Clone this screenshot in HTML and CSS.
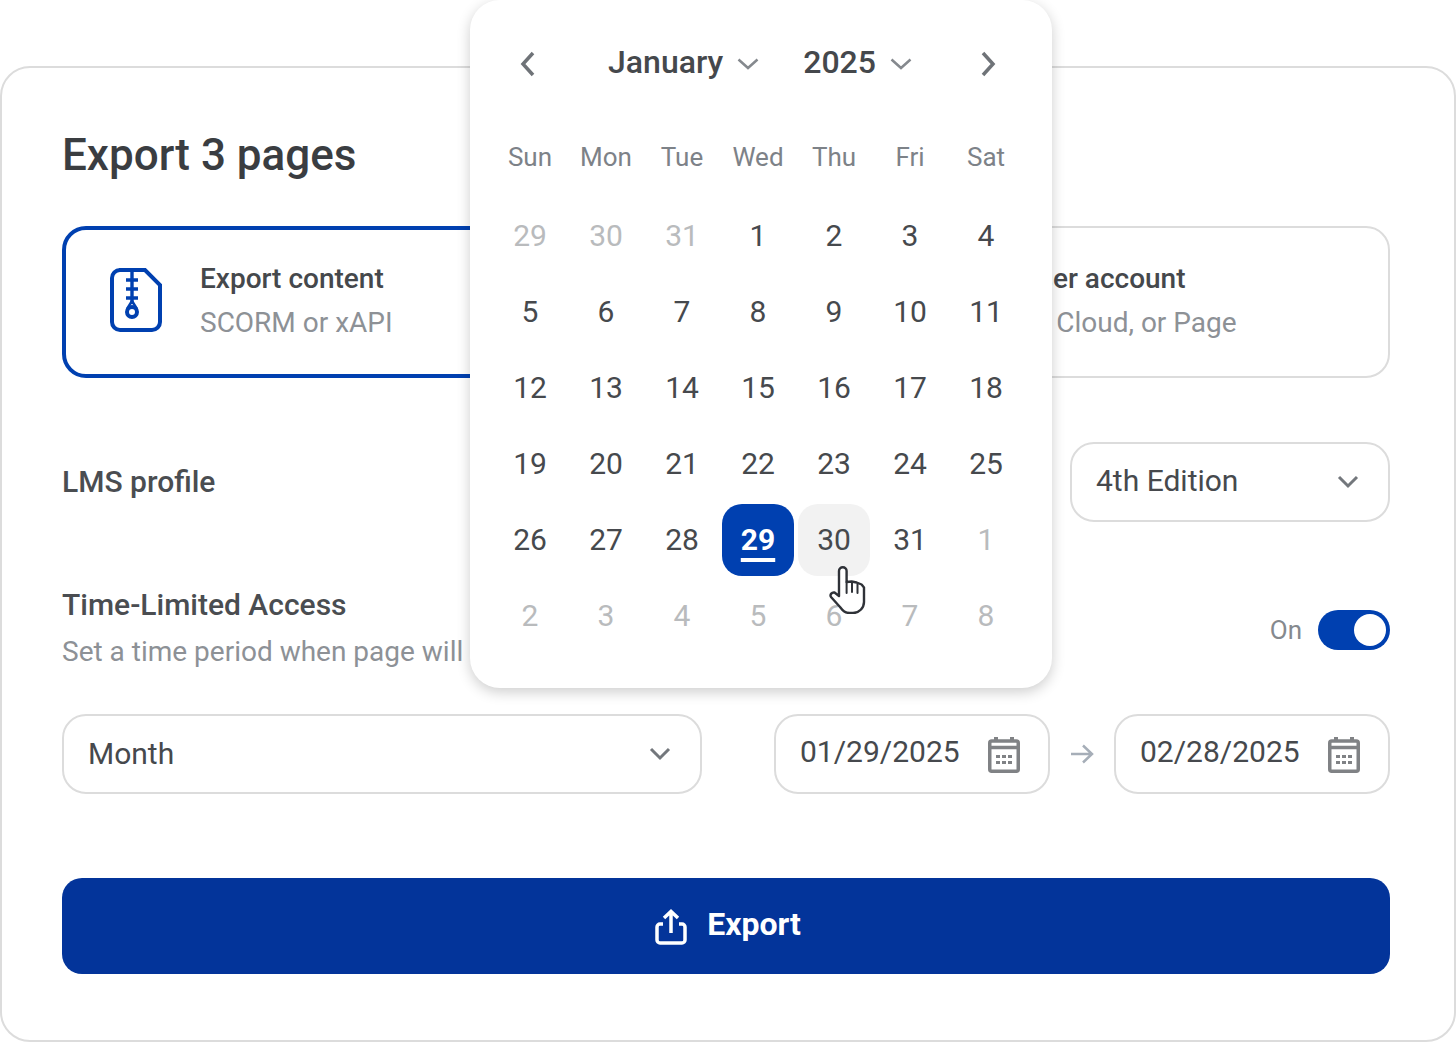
FILE: index.html
```html
<!DOCTYPE html>
<html lang="en">
<head>
<meta charset="utf-8">
<title>Export 3 pages</title>
<link rel="stylesheet" href="styles.css">
</head>
<body>
<main class="card">
  <h1 class="title">Export 3 pages</h1>
  <div class="options">
    <div class="option option-active">
      <svg class="zip" viewBox="0 0 52 64" fill="none" stroke="#0040b0" stroke-width="4"><path d="M9 2h26l15 15v37a8 8 0 0 1-8 8H10a8 8 0 0 1-8-8V10a8 8 0 0 1 8-8z"/><path d="M22 4v32M16 12h12M16 21h12M16 30h12" stroke-width="3.400"/><circle cx="22" cy="44" r="5" stroke-width="4"/><path d="M22 33l-5 8M22 33l5 8" stroke-width="2.500"/></svg>
      <div class="option-text">
        <div class="option-title">Export content</div>
        <div class="option-sub">SCORM or xAPI</div>
      </div>
    </div>
    <div class="option option-right">
      <div class="option-text">
        <div class="option-title">user account</div>
        <div class="option-sub">in Cloud, or Page</div>
      </div>
    </div>
  </div>
  <div class="row-lms">
    <div class="label">LMS profile</div>
    <div class="select select-edition"><span>4th Edition</span><svg class="chev" viewBox="0 0 24 24"><path d="M3 7l9 9 9-9"/></svg></div>
  </div>
  <div class="row-limit">
    <div>
      <div class="label">Time-Limited Access</div>
      <div class="desc">Set a time period when page will</div>
    </div>
    <div class="toggle-wrap"><span class="on">On</span><span class="toggle"><span class="knob"></span></span></div>
  </div>
  <div class="row-dates">
    <div class="select select-month"><span>Month</span><svg class="chev" viewBox="0 0 24 24"><path d="M3 7l9 9 9-9"/></svg></div>
    <div class="date-range">
      <div class="date"><span>01/29/2025</span><svg class="cal" viewBox="0 0 32 36"><path d="M8 0v5M24 0v5" stroke-width="4"/><rect x="1.750" y="4" width="28.500" height="30.250" rx="2"/><path d="M1.750 10.500h28.500" stroke-width="3.500"/><path class="dots" d="M8 18h4v3H8zM14 18h4v3h-4zM20 18h4v3h-4zM8 24h4v3H8zM14 24h4v3h-4zM20 24h4v3h-4z"/></svg></div>
      <svg class="arrow" viewBox="0 0 24 20"><path d="M1 10h21M13 1.500l9 8.500-9 8.500"/></svg>
      <div class="date"><span>02/28/2025</span><svg class="cal" viewBox="0 0 32 36"><path d="M8 0v5M24 0v5" stroke-width="4"/><rect x="1.750" y="4" width="28.500" height="30.250" rx="2"/><path d="M1.750 10.500h28.500" stroke-width="3.500"/><path class="dots" d="M8 18h4v3H8zM14 18h4v3h-4zM20 18h4v3h-4zM8 24h4v3H8zM14 24h4v3h-4zM20 24h4v3h-4z"/></svg></div>
    </div>
  </div>
  <button class="export"><svg class="up" viewBox="0 0 32 36"><path d="M16 24V2.500M9 9l7-6.500L23 9M8 15H5a3 3 0 0 0-3 3v13a3 3 0 0 0 3 3h22a3 3 0 0 0 3-3V18a3 3 0 0 0-3-3h-3"/></svg><span>Export</span></button>
</main>

<section class="popover">
  <header class="cal-head">
    <svg class="nav" viewBox="0 0 16 28"><path d="M13 3L3 14l10 11"/></svg>
    <div class="cal-picks">
      <span class="pick pick-month">January<svg class="mini" viewBox="0 0 22 12"><path d="M1.500 1.500L11 10l9.500-8.500"/></svg></span>
      <span class="pick">2025<svg class="mini" viewBox="0 0 22 12"><path d="M1.500 1.500L11 10l9.500-8.500"/></svg></span>
    </div>
    <svg class="nav" viewBox="0 0 16 28"><path d="M3 3l10 11L3 25"/></svg>
  </header>
  <div class="grid weekdays">
    <span>Sun</span><span>Mon</span><span>Tue</span><span>Wed</span><span>Thu</span><span>Fri</span><span>Sat</span>
  </div>
  <div class="grid days">
    <span class="muted">29</span><span class="muted">30</span><span class="muted">31</span><span>1</span><span>2</span><span>3</span><span>4</span>
    <span>5</span><span>6</span><span>7</span><span>8</span><span>9</span><span>10</span><span>11</span>
    <span>12</span><span>13</span><span>14</span><span>15</span><span>16</span><span>17</span><span>18</span>
    <span>19</span><span>20</span><span>21</span><span>22</span><span>23</span><span>24</span><span>25</span>
    <span>26</span><span>27</span><span>28</span><span class="selected">29</span><span class="hover">30</span><span>31</span><span class="muted">1</span>
    <span class="muted">2</span><span class="muted">3</span><span class="muted">4</span><span class="muted">5</span><span class="muted">6</span><span class="muted">7</span><span class="muted">8</span>
  </div>
</section>

<svg class="cursor" viewBox="0 0 38 48"><path d="M11 30V5a3.800 3.800 0 0 1 7.600 0v11l5-.5 5 1 5 2 2.400 3V36c0 6-5 11-11 11h-3c-5 0-7-2-10-6l-9-10c-1.500-2.500 1-5 3.500-4.500z"/><path class="lines" d="M18.600 16v11M24 16v10M29.500 18v9"/></svg>
</body>
</html>
```

FILE: styles.css
```css
* { box-sizing: border-box; }
html, body { margin: 0; padding: 0; }
body {
  width: 1456px;
  height: 1042px;
  overflow: hidden;
  padding-top: 66px;
  background: #fff;
  font-family: Roboto, "Liberation Sans", sans-serif;
  color: #3c3f43;
  position: relative;
}
.card {
  height: 976px;
  border: 2px solid #dcdcdc;
  border-radius: 30px;
  padding: 60px 64px 0 60px;
  background: #fff;
}
.title {
  margin: 0;
  height: 54px;
  line-height: 54px;
  font-size: 44px;
  font-weight: 500;
  color: #3a3d41;
}
.options {
  display: grid;
  grid-template-columns: 652px 652px;
  gap: 24px;
  margin-top: 44px;
}
.option {
  height: 152px;
  border: 2px solid #dcdcdc;
  border-radius: 24px;
  display: flex;
  align-items: center;
  white-space: nowrap;
}
.option-active { border: 4px solid #0040b0; padding-left: 44px; }
.option-right { padding-left: 283px; }
.option-right .option-sub { padding-left: 4px; }
.zip { width: 52px; height: 64px; margin-right: 38px; margin-top: -4px; }
.option-text { margin-top: -2px; }
.option-title { font-size: 28px; font-weight: 500; line-height: 36px; color: #45484c; }
.option-sub { font-size: 28px; line-height: 36px; margin-top: 8px; color: #8d9196; }
.row-lms {
  display: flex;
  justify-content: space-between;
  align-items: center;
  margin-top: 64px;
  height: 80px;
}
.label { font-size: 30px; font-weight: 500; line-height: 36px; color: #4a4d51; }
.select, .date {
  height: 80px;
  border: 2px solid #dcdcdc;
  border-radius: 24px;
  display: flex;
  align-items: center;
  justify-content: space-between;
  font-size: 30px;
  color: #46494d;
  background: #fff;
}
.select-edition { width: 320px; padding: 0 28px 0 24px; }
.select-edition span { margin-top: -3px; }
.select-month { width: 640px; padding: 0 28px 0 24px; }
.select-month span { margin-top: -2px; }
.chev { width: 24px; height: 24px; fill: none; stroke: #73777c; stroke-width: 3; }
.row-limit {
  display: flex;
  justify-content: space-between;
  align-items: center;
  margin-top: 65px;
  height: 83px;
}
.desc { font-size: 28px; line-height: 36px; margin-top: 11px; color: #8d9196; white-space: nowrap; }
.toggle-wrap { display: flex; align-items: center; gap: 16px; margin-top: 3px; }
.on { font-size: 26px; color: #85898e; }
.toggle {
  width: 72px;
  height: 40px;
  border-radius: 20px;
  background: #0040b0;
  display: flex;
  justify-content: flex-end;
  align-items: center;
  padding-right: 4px;
}
.knob { width: 32px; height: 32px; border-radius: 50%; background: #fff; }
.row-dates {
  display: flex;
  justify-content: space-between;
  margin-top: 44px;
}
.date-range { display: flex; align-items: center; }
.date { width: 276px; padding: 0 28px 0 24px; }
.date span { margin-top: -6px; }
.cal { width: 32px; height: 36px; fill: none; stroke: #808285; stroke-width: 3.500; margin-top: 2px; }
.cal .dots { fill: #808285; stroke: none; }
.arrow { width: 24px; height: 20px; margin: 0 20px; fill: none; stroke: #a6aeb8; stroke-width: 2.500; }
.export {
  display: flex;
  align-items: center;
  justify-content: center;
  gap: 20px;
  width: 1328px;
  height: 96px;
  margin-top: 84px;
  padding: 0 0 0 4px;
  border: 0;
  border-radius: 20px;
  background: #03349a;
  color: #fff;
  font-family: inherit;
  font-size: 32px;
  font-weight: 700;
}
.export span { margin-top: -4px; }
.up { width: 32px; height: 36px; fill: none; stroke: #fff; stroke-width: 3.500; margin-top: 2px; }
.popover {
  position: absolute;
  left: 470px;
  top: 0;
  width: 582px;
  height: 688px;
  padding: 0 30px 0 24px;
  background: #fff;
  border-radius: 30px;
  box-shadow: 0 4px 14px rgba(0, 0, 0, .2);
}
.cal-head {
  height: 126px;
  display: flex;
  align-items: center;
  justify-content: space-between;
  padding: 0 26px;
}
.nav { width: 16px; height: 28px; fill: none; stroke: #6f7378; stroke-width: 3.500; margin-top: 2px; }
.cal-picks { display: flex; gap: 44px; margin: -2px 0 0 4px; }
.pick {
  display: flex;
  align-items: center;
  gap: 14px;
  font-size: 32px;
  font-weight: 500;
  color: #45484c;
}
.mini { width: 22px; height: 12px; fill: none; stroke: #85898e; stroke-width: 2.500; margin-top: 4px; }
.grid {
  display: grid;
  grid-template-columns: repeat(7, 72px);
  column-gap: 4px;
  text-align: center;
}
.weekdays { height: 62px; font-size: 26px; color: #7d8288; line-height: 62px; }
.days { grid-auto-rows: 72px; row-gap: 4px; margin-top: 12px; font-size: 30px; color: #46494d; }
.days span { display: flex; align-items: center; justify-content: center; border-radius: 20px; padding-bottom: 2px; }
.days .muted { color: #b9bbbd; }
.days .selected {
  background: #0040b0;
  color: #fff;
  font-weight: 700;
  text-decoration: underline;
  text-decoration-thickness: 4px;
  text-underline-offset: 8px;
}
.days .hover { background: #f2f2f2; }
.cursor {
  position: absolute;
  left: 828px;
  top: 566px;
  width: 38px;
  height: 48px;
  fill: #fff;
  stroke: #2f3238;
  stroke-width: 2.400;
  stroke-linejoin: round;
  stroke-linecap: round;
}
.cursor .lines { fill: none; stroke-width: 2; }
```
